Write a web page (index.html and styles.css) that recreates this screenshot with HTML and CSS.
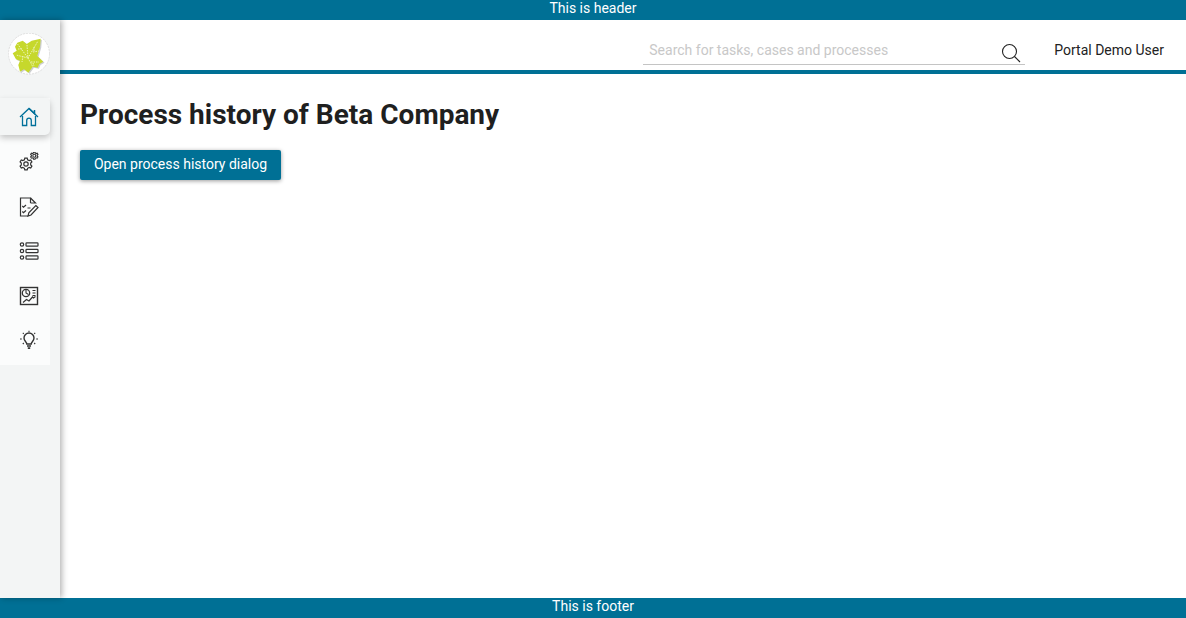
FILE: index.html
```html
<!DOCTYPE html>
<html lang="en">
<head>
<meta charset="utf-8">
<title>Process history</title>
<link rel="stylesheet" href="styles.css">
</head>
<body>
<div class="page">
  <div class="bar">This is header</div>
  <div class="middle">
    <aside class="sidebar">
      <div class="logo">
        <svg width="42" height="42" viewBox="0 0 42 42">
          <circle cx="21" cy="20.700" r="20.500" fill="#fff" stroke="#dedede" stroke-dasharray="2 1"/>
          <path d="M9.300 9.700 14.700 7.700 18.700 11 23.700 7.700 32.700 5.700 32 13.700 29.300 23 35.300 28.700 31.300 31 29.700 34.700 24.700 33.700 20.300 39.700 16 36.300 12 38.700 10.300 32 12 27.700 8 26.300 4.700 20.300 8.700 17.700 7 13.700z" fill="#9a9da3" opacity=".5" transform="translate(1.200 1)"/>
          <path d="M9.300 9.700 14.700 7.700 18.700 11 23.700 7.700 32.700 5.700 32 13.700 29.300 23 35.300 28.700 31.300 31 29.700 34.700 24.700 33.700 20.300 39.700 16 36.300 12 38.700 10.300 32 12 27.700 8 26.300 4.700 20.300 8.700 17.700 7 13.700z" fill="#c6d82c"/>
          <path d="M9.500 11 20 25l5 9M19 12l1 13 10-17M20 25 8 22M25 19l6-1M23 29l8 0M14 16l-4 0M26 14l0 5M25 30l1 3M15 23l-1 6" fill="none" stroke="#f1f6c4" stroke-width=".9" stroke-dasharray="1.500 1"/>
        </svg>
      </div>
      <nav class="menu">
        <a class="item active">
          <svg width="20" height="20" viewBox="0 0 20 20" fill="none" stroke="#00709a" stroke-width="1.300"><path d="M1 10 10 1.500 19 10"/><path d="M3.500 9v9.500h4.200v-5a2.300 2.300 0 0 1 4.600 0v5h4.200V9"/><path d="M10 1.500l5.500 5V3" stroke-width="1.500"/></svg>
        </a>
        <a class="item">
          <svg width="20" height="20" viewBox="0 0 20 20" fill="none" stroke="#333" stroke-width="1.200">
            <circle cx="7" cy="12" r="2.200"/>
            <path d="M5.800 6.200h2.400l.4 1.600 1.600.8 1.500-.6 1.200 2-1.200 1.100v1.800l1.200 1.100-1.200 2-1.500-.6-1.600.9-.4 1.500H5.800l-.4-1.500-1.600-.9-1.500.6-1.200-2 1.200-1.100v-1.800L1.100 10l1.200-2 1.500.6 1.600-.8z"/>
            <g transform="translate(15.300 3.700) scale(.62) translate(-7 -12)" stroke-width="1.800">
              <circle cx="7" cy="12" r="2.400"/>
              <path d="M5.800 6.200h2.400l.4 1.600 1.600.8 1.500-.6 1.200 2-1.200 1.100v1.800l1.200 1.100-1.200 2-1.500-.6-1.600.9-.4 1.500H5.800l-.4-1.500-1.600-.9-1.500.6-1.200-2 1.200-1.100v-1.800L1.100 10l1.200-2 1.500.6 1.600-.8z"/>
            </g>
          </svg>
        </a>
        <a class="item">
          <svg width="20" height="20" viewBox="0 0 20 20" fill="none" stroke="#333" stroke-width="1.200"><path d="M11.500 6V1H1.500v18h7.500"/><path d="M11.500 1l5 5h-5"/><path d="M3.300 9l1.200 1.200L7 8M3.300 14.500l1.200 1.200L7 13.500M8.500 11h3"/><path d="M16.800 8.500l2.200 2-7 7.500-3 1 .8-3.200z"/></svg>
        </a>
        <a class="item">
          <svg width="20" height="20" viewBox="0 0 20 20" fill="none" stroke="#333" stroke-width="1.200"><circle cx="3" cy="3.500" r="1.700"/><circle cx="3" cy="10" r="1.700"/><circle cx="3" cy="16.500" r="1.700"/><rect x="7" y="1.800" width="12" height="3.400" rx=".8"/><rect x="7" y="8.300" width="12" height="3.400" rx=".8"/><rect x="7" y="14.800" width="12" height="3.400" rx=".8"/></svg>
        </a>
        <a class="item">
          <svg width="20" height="20" viewBox="0 0 20 20" fill="none" stroke="#333" stroke-width="1.100"><rect x="1.500" y="1.500" width="17" height="17" stroke-width="1.400"/><circle cx="7" cy="7" r="3.700" stroke-width="1.300"/><path d="M7 4v3l2.500 1.500M13.500 4.500h3M13.500 7h3M13.500 9.500h3"/><path d="M4 16.500l3.500-3 2.500 1.500 3.500-4 1 1 2-1.500" stroke-width="1.200"/></svg>
        </a>
        <a class="item">
          <svg width="20" height="20" viewBox="0 0 20 20" fill="none" stroke="#333" stroke-width="1.400"><path d="M7.800 14c0-2-2.800-2.800-2.800-6a5 5 0 0 1 10 0c0 3.200-2.800 4-2.800 6z"/><path d="M8 16h4M8.800 18.200h2.400" stroke-width="1.700"/><path d="M10 .8v1.200M3.800 2.800l1 1M16.200 2.800l-1 1M1 9h1.800M17.200 9H19M3.800 14l1-1M16.200 14l-1-1" stroke-width="1.100"/></svg>
        </a>
      </nav>
    </aside>
    <div class="content">
      <header class="topbar">
        <div class="search">
          <span class="placeholder">Search for tasks, cases and processes</span>
          <svg class="search-icon" width="20" height="20" viewBox="0 0 20 20" fill="none" stroke="#222" stroke-width="1.100"><circle cx="8.500" cy="8.500" r="7"/><path d="M13.500 13.500 19 19"/></svg>
        </div>
        <span class="user">Portal Demo User</span>
      </header>
      <main class="main">
        <h1 class="title">Process history of Beta Company</h1>
        <button class="btn" type="button">Open process history dialog</button>
      </main>
    </div>
  </div>
  <div class="bar">This is footer</div>
</div>
</body>
</html>
```
FILE: styles.css
```css
* { box-sizing: border-box; }
html, body { margin: 0; height: 100%; }
body { font-family: Roboto, sans-serif; background: #fff; color: #1f1f1f; overflow: hidden; }
.page { height: 618px; display: flex; flex-direction: column; }
.bar { height: 20px; flex: none; background: #007095; color: #fff; font-size: 14px; line-height: 17px; text-align: center; }
.middle { flex: 1; display: flex; min-height: 0; }
.sidebar { width: 60px; flex: none; background: #f3f5f5; box-shadow: 2px 0 6px rgba(0,0,0,.3); position: relative; z-index: 1; }
.logo { height: 78px; padding: 13px 0 0 8px; }
.logo svg { display: block; }
.menu { width: 50px; background: #fbfcfc; display: flex; flex-direction: column; padding-bottom: 2px; }
.item { height: 44.500px; display: flex; align-items: center; justify-content: center; padding-left: 8px; }
.item.active { height: 37px; margin-bottom: 5px; background: #f3f5f5; border-radius: 0 5px 5px 0; box-shadow: 0 3px 6px rgba(0,0,0,.22); }
.content { flex: 1; min-width: 0; display: flex; flex-direction: column; }
.topbar { height: 54px; flex: none; border-bottom: 4px solid #007095; display: flex; justify-content: flex-end; align-items: flex-start; padding: 20px 22px 0 0; }
.search { width: 382px; height: 25px; border-bottom: 1px solid #c4c4c4; margin-right: 29px; display: flex; justify-content: space-between; align-items: flex-start; padding: 0 4px 0 6px; }
.search-icon { margin-top: 3px; }
.placeholder { color: #c8c8c8; font-size: 14px; line-height: 20px; }
.user { font-size: 14px; line-height: 20px; color: #222; }
.main { padding: 20px; }
.title { margin: 0 0 15px; font-size: 28px; line-height: 41px; font-weight: 700; color: #1f1f1f; }
.btn { display: block; height: 30px; width: 201px; padding: 0 0 2px; border: 0; border-radius: 2px; background: #007095; color: #fff; font: 14px Roboto, sans-serif; box-shadow: 0 1px 4px rgba(0,0,0,.4); }
```
